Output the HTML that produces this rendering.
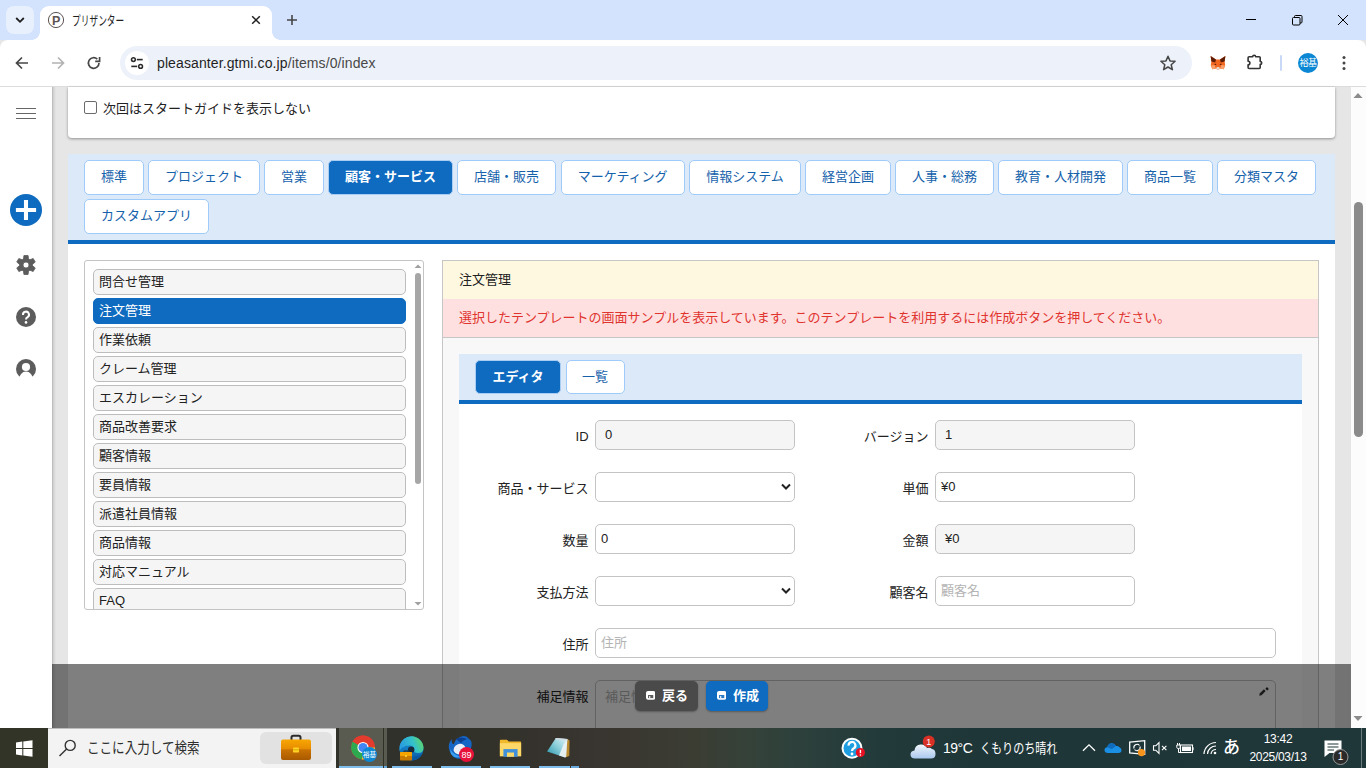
<!DOCTYPE html>
<html lang="ja">
<head>
<meta charset="utf-8">
<title>プリザンター</title>
<style>
*{box-sizing:border-box;margin:0;padding:0}
html,body{width:1366px;height:768px;overflow:hidden;background:#e6e6e6}
body{position:relative;font-family:"Liberation Sans","Noto Sans CJK JP",sans-serif;font-size:13px;color:#222}
.abs{position:absolute}
/* ---------- browser chrome ---------- */
#tabstrip{left:0;top:0;width:1366px;height:40px;background:#d3e3fd}
#tabdd{left:6px;top:6px;width:28px;height:28px;border-radius:8px;background:#e8effd}
#tab{left:40px;top:6px;width:232px;height:34px;background:#fff;border-radius:9px 9px 0 0}
#tab:before,#tab:after{content:"";position:absolute;bottom:0;width:8px;height:8px;background:radial-gradient(circle at 0 0,rgba(255,255,255,0) 7.5px,#fff 8px)}
#tab:before{left:-8px}
#tab:after{right:-8px;background:radial-gradient(circle at 100% 0,rgba(255,255,255,0) 7.5px,#fff 8px)}
#tabtitle{left:72px;top:11.700px;font-size:13px;color:#1f1f1f;line-height:18px;white-space:nowrap;transform:scaleX(.67);transform-origin:0 50%}
#toolbar{left:0;top:40px;width:1366px;height:46px;background:#fff;border-radius:8px 8px 0 0}
#tbline{left:0;top:86px;width:1366px;height:1px;background:#dcdcdc}
#omni{left:120px;top:46px;width:1072px;height:34px;border-radius:17px;background:#edf2fa}
#site{left:125px;top:51px;width:24px;height:24px;border-radius:12px;background:#fff}
#url{left:157px;top:54px;font-size:14px;line-height:18px;color:#1f1f1f;white-space:nowrap;letter-spacing:0.11px}
#url span{color:#474747}
#avatar{left:1297.7px;top:52.5px;width:20.5px;height:20.5px;border-radius:11px;background:#0b87d4;color:#fff;font-size:9px;line-height:20px;text-align:center;letter-spacing:-0.5px}
#sep{left:1280px;top:55px;width:2px;height:16px;background:#c7d9f7;border-radius:1px}
/* ---------- page ---------- */
#side{left:0;top:87px;width:52px;height:641px;background:#fff}
#sideshadow{left:52px;top:87px;width:4px;height:641px;background:linear-gradient(90deg,#b4b4b4,#d4d4d4 40%,#e6e6e6)}
#card1{left:68px;top:87px;width:1267px;height:51px;background:#fff;border-radius:0 0 4px 4px;box-shadow:0 1px 3px rgba(0,0,0,.38)}
#chk{left:84px;top:101px;width:13px;height:13px;border:1px solid #6b6b6b;border-radius:2px;background:#fff}
#chklabel{left:103px;top:99px;line-height:19px;white-space:nowrap;color:#222}
#main{left:68px;top:154px;width:1267px;height:574px;background:#fff}
#tabs{left:68px;top:154px;width:1267px;height:86px;background:#dce9f8}
#tabsline{left:68px;top:240px;width:1267px;height:4px;background:#0f6bbf}
.tb{position:absolute;height:35px;border:1px solid #9fcbfb;border-radius:5px;background:#fff;color:#1562ab;font-size:13px;line-height:32px;text-align:center;white-space:nowrap}
.tb.on{background:#0f6bbf;border-color:#a9cdf3;color:#fff;font-weight:bold}
/* list */
#list{left:84px;top:260px;width:340px;height:350px;border:1px solid #c4c4c4;border-radius:3px;background:#fff;overflow:hidden}
.li{position:absolute;left:8px;width:313px;height:26px;border:1px solid #bdbdbd;border-radius:5px;background:#f5f5f5;line-height:23px;padding-left:5px;color:#222;white-space:nowrap}
.li.on{background:#0f6bbf;border-color:#0f6bbf;color:#fff}
#lthumb{left:330px;top:12px;width:6px;height:211px;border-radius:3px;background:#a6a6a6}
/* right panel */
#panel{left:442px;top:260px;width:877px;height:480px;border:1px solid #c6c6c6;background:#f8f8f8}
#ptitle{left:0;top:0;width:875px;height:38px;background:#fff8e1;line-height:38px;padding-left:16px;color:#222}
#pmsg{left:0;top:38px;width:875px;height:39px;background:#ffe0e0;line-height:38px;padding-left:16px;color:#e0342f;border-bottom:1px solid #c6c6c6;white-space:nowrap}
#itabs{left:16px;top:93px;width:843px;height:46px;background:#dce9f8}
#itabsline{left:16px;top:139px;width:843px;height:4px;background:#0f6bbf}
#form{left:16px;top:143px;width:843px;height:340px;background:#fff}
.lb{position:absolute;text-align:right;white-space:nowrap;line-height:20px;color:#222}
.fd{position:absolute;height:30px;border:1px solid #c4c4c4;border-radius:5px;background:#fff;line-height:27px;padding-left:5px;color:#222;white-space:nowrap}
.fd.ro{background:#f5f5f5;padding-left:9px}
.fd.ph{color:#b4b4b4}
.caret{position:absolute;right:2px;top:10px;width:12px;height:8px}
/* overlay */
#ov{left:52px;top:664px;width:1299px;height:64px;background:rgba(0,0,0,.5)}
.ob{position:absolute;top:17px;height:30px;border-radius:5px;color:#fff;font-weight:bold;font-size:13px;line-height:29px;white-space:nowrap;box-shadow:0 1px 2px rgba(0,0,0,.3)}
/* scrollbar */
#sb{left:1351px;top:87px;width:15px;height:641px;background:#fcfcfc}
#sbthumb{left:1354px;top:202px;width:9px;height:235px;border-radius:4.500px;background:#8b8b8b}
/* taskbar */
#task{left:0;top:728px;width:1366px;height:40px;background:linear-gradient(90deg,#323427 0,#30312a 28%,#32312a 36%,#393530 44%,#3b3d33 51%,#33423a 55.6%,#2a3f3c 60%,#223a3a 64.500%,#1f3638 72%,#20373a 100%)}
#search{left:48px;top:729px;width:288px;height:39px;background:#f3f3f3}
#searchtxt{left:86.500px;top:737px;font-size:15px;line-height:22px;color:#2e2e2e;white-space:nowrap;transform:scaleX(.837);transform-origin:0 50%}
#brief{left:260px;top:732px;width:72px;height:32px;border-radius:6px;background:#e2e2e2}
.tk{position:absolute;color:#fff;white-space:nowrap}
.ul{position:absolute;top:766px;height:2px;background:#7fbdec}
</style>
</head>
<body>
<!-- ======= browser chrome ======= -->
<div id="tabstrip" class="abs"></div>
<div id="tabdd" class="abs"></div>
<div id="tab" class="abs"></div>
<div id="tabtitle" class="abs">プリザンター</div>
<div id="toolbar" class="abs"></div>
<div id="tbline" class="abs"></div>
<div id="omni" class="abs"></div>
<div id="site" class="abs"></div>
<div id="url" class="abs">pleasanter.gtmi.co.jp<span>/items/0/index</span></div>
<div id="sep" class="abs"></div>
<div id="avatar" class="abs">裕基</div>
<svg class="abs" style="left:14px;top:15px" width="12" height="10" viewBox="0 0 12 10"><path d="M2.2 3 L6 6.8 L9.8 3" fill="none" stroke="#1f1f1f" stroke-width="1.8"/></svg>
<svg class="abs" style="left:47px;top:11px" width="18" height="18" viewBox="0 0 18 18"><circle cx="9" cy="9" r="7.6" fill="#fff" stroke="#5e5353" stroke-width="1"/><text x="9.200" y="13.500" text-anchor="middle" font-family="Liberation Sans, sans-serif" font-weight="bold" font-size="12.5" fill="#5e5353">P</text></svg>
<svg class="abs" style="left:250px;top:14px" width="12" height="12" viewBox="0 0 12 12"><path d="M2.2 2.2 L9.8 9.8 M9.8 2.2 L2.2 9.8" stroke="#1f1f1f" stroke-width="1.5" fill="none"/></svg>
<svg class="abs" style="left:285px;top:13px" width="14" height="14" viewBox="0 0 14 14"><path d="M7 2 V12 M2 7 H12" stroke="#444746" stroke-width="1.6" fill="none"/></svg>
<svg class="abs" style="left:1240px;top:10px" width="116" height="20" viewBox="0 0 116 20"><path d="M6 9.5 H16" stroke="#000" stroke-width="1"/><rect x="52.5" y="7.5" width="7.5" height="7.5" rx="1" fill="none" stroke="#000" stroke-width="1"/><path d="M54.5 7.5 V6.5 Q54.5 5.5 55.5 5.5 H61 Q62 5.5 62 6.5 V12 Q62 13 61 13 H60" fill="none" stroke="#000" stroke-width="1"/><path d="M98 5 L108 15 M108 5 L98 15" stroke="#000" stroke-width="1" fill="none"/></svg>
<svg class="abs" style="left:14px;top:55px" width="16" height="16" viewBox="0 0 16 16"><path d="M14 8 H3 M8 2.5 L2.5 8 L8 13.5" fill="none" stroke="#474747" stroke-width="1.7"/></svg>
<svg class="abs" style="left:50px;top:55px" width="16" height="16" viewBox="0 0 16 16"><path d="M2 8 H13 M8 2.5 L13.5 8 L8 13.5" fill="none" stroke="#b3b3b3" stroke-width="1.7"/></svg>
<svg class="abs" style="left:85px;top:54px" width="18" height="18" viewBox="0 0 18 18"><path d="M14 9 A5.3 5.3 0 1 1 12.3 5.1" fill="none" stroke="#474747" stroke-width="1.7"/><path d="M14.6 3 V7.4 H10.2" fill="none" stroke="#474747" stroke-width="1.7"/></svg>
<svg class="abs" style="left:129px;top:55px" width="16" height="16" viewBox="0 0 16 16"><circle cx="4.400" cy="4.600" r="1.900" fill="none" stroke="#2a2a2a" stroke-width="1.500"/><path d="M7.800 4.600 H13.700" stroke="#2a2a2a" stroke-width="1.600"/><path d="M2.300 11.400 H8.200" stroke="#2a2a2a" stroke-width="1.600"/><circle cx="11.600" cy="11.400" r="1.900" fill="none" stroke="#2a2a2a" stroke-width="1.500"/></svg>
<svg class="abs" style="left:1159px;top:54px" width="18" height="18" viewBox="0 0 18 18"><path d="M9 2.2 L11 6.9 L16.1 7.3 L12.2 10.7 L13.4 15.7 L9 13 L4.6 15.7 L5.8 10.7 L1.9 7.3 L7 6.9 Z" fill="none" stroke="#474747" stroke-width="1.5" stroke-linejoin="round"/></svg>
<svg class="abs" style="left:1210px;top:55px" width="16" height="16" viewBox="0 0 16 16"><path d="M0.600 1 L6 4.600 H10 L15.400 1 L14.600 6.600 L15.200 10.400 L13.600 14.200 L10 13.400 L9 14.600 H7 L6 13.400 L2.400 14.200 L0.800 10.400 L1.400 6.600 Z" fill="#f2661f"/><path d="M0.600 1 L6 4.600 L5.200 7.600 L1.400 6.600 Z" fill="#5c1d08"/><path d="M15.400 1 L10 4.600 L10.800 7.600 L14.600 6.600 Z" fill="#5c1d08"/><path d="M0.800 10.400 L4.500 10 L6 13.400 L2.400 14.200Z M15.200 10.400 L11.500 10 L10 13.400 L13.600 14.200Z" fill="#f9a06a"/><path d="M6 13.400 L7 12 H9 L10 13.400 L9 14.600 H7 Z" fill="#e4d6cb"/><path d="M5 8.400 L6.600 10 L4.400 9.800 Z M11 8.400 L9.400 10 L11.600 9.800Z" fill="#3a1208"/></svg>
<svg class="abs" style="left:1246px;top:53px" width="18" height="18" viewBox="0 0 18 18"><path d="M3.100 3.800 H6.700 A1.450 1.600 0 0 1 9.600 3.800 H13.200 Q14.200 3.800 14.200 4.800 V8.500 A1.500 1.450 0 0 1 14.200 11.400 V14.500 Q14.200 15.500 13.200 15.500 H3.100 Q2.100 15.500 2.100 14.500 V11.700 A1.800 1.750 0 0 0 2.100 8.200 V4.800 Q2.100 3.800 3.100 3.800Z" fill="none" stroke="#333" stroke-width="1.600" stroke-linejoin="round"/></svg>
<svg class="abs" style="left:1340px;top:54px" width="8" height="18" viewBox="0 0 8 18"><circle cx="4" cy="3.4" r="1.5" fill="#444"/><circle cx="4" cy="8.900" r="1.5" fill="#444"/><circle cx="4" cy="14.400" r="1.5" fill="#444"/></svg>

<!-- ======= page ======= -->
<div id="side" class="abs"></div>
<div id="sideshadow" class="abs"></div>
<svg class="abs" style="left:16px;top:107px" width="21" height="13" viewBox="0 0 21 13"><path d="M0 1.500 H20 M0 6.500 H20 M0 11.500 H20" stroke="#666" stroke-width="1"/></svg>
<svg class="abs" style="left:10px;top:194px" width="32" height="32" viewBox="0 0 32 32"><circle cx="16" cy="16" r="16" fill="#0f6bbf"/><path d="M16 5.900 V26.100 M5.900 16 H26.100" stroke="#fff" stroke-width="4.100"/></svg>
<svg class="abs" style="left:15.500px;top:255px" width="20" height="20" viewBox="0 0 20 20"><path d="M7.43 3.92 L7.93 0.52 L12.07 0.52 L12.57 3.92 L13.98 4.73 L17.17 3.47 L19.24 7.05 L16.55 9.19 L16.55 10.81 L19.24 12.95 L17.17 16.53 L13.98 15.27 L12.57 16.08 L12.07 19.48 L7.93 19.48 L7.43 16.08 L6.02 15.27 L2.83 16.53 L0.76 12.95 L3.45 10.81 L3.45 9.19 L0.76 7.05 L2.83 3.47 L6.02 4.73Z M10 7 A3 3 0 1 0 10 13 A3 3 0 1 0 10 7Z" fill="#5c5c5c" fill-rule="evenodd" stroke="#5c5c5c" stroke-width="0.8" stroke-linejoin="round"/></svg>
<svg class="abs" style="left:16px;top:307px" width="20" height="20" viewBox="0 0 20 20"><circle cx="10" cy="10" r="10" fill="#5c5c5c"/><path d="M7 8 A3 3 0 1 1 11.600 10.200 Q10 11 10 12.600" fill="none" stroke="#fff" stroke-width="2"/><circle cx="10" cy="15.400" r="1.300" fill="#fff"/></svg>
<svg class="abs" style="left:16px;top:359px" width="20" height="20" viewBox="0 0 20 20"><defs><clipPath id="uc"><circle cx="10" cy="10" r="10"/></clipPath></defs><circle cx="10" cy="10" r="10" fill="#5c5c5c"/><circle cx="10" cy="8" r="4.100" fill="#fff"/><ellipse cx="10" cy="21" rx="7" ry="8.400" fill="#fff"/></svg>
<div id="card1" class="abs"></div>
<div id="chk" class="abs"></div>
<div id="chklabel" class="abs">次回はスタートガイドを表示しない</div>
<div id="main" class="abs"></div>
<div id="tabs" class="abs"></div>
<div id="tabsline" class="abs"></div>
<div class="tb" style="left:84px;top:160px;width:60px">標準</div>
<div class="tb" style="left:148px;top:160px;width:112px">プロジェクト</div>
<div class="tb" style="left:264px;top:160px;width:60px">営業</div>
<div class="tb on" style="left:328px;top:160px;width:125px">顧客・サービス</div>
<div class="tb" style="left:457px;top:160px;width:99px">店舗・販売</div>
<div class="tb" style="left:560.5px;top:160px;width:124.3px">マーケティング</div>
<div class="tb" style="left:689px;top:160px;width:112px">情報システム</div>
<div class="tb" style="left:805px;top:160px;width:86px">経営企画</div>
<div class="tb" style="left:895px;top:160px;width:99px">人事・総務</div>
<div class="tb" style="left:998px;top:160px;width:125px">教育・人材開発</div>
<div class="tb" style="left:1127px;top:160px;width:86px">商品一覧</div>
<div class="tb" style="left:1217px;top:160px;width:99px">分類マスタ</div>
<div class="tb" style="left:84px;top:199px;width:125px">カスタムアプリ</div>
<div id="list" class="abs">
<div class="li" style="top:8px">問合せ管理</div>
<div class="li on" style="top:37px">注文管理</div>
<div class="li" style="top:66px">作業依頼</div>
<div class="li" style="top:95px">クレーム管理</div>
<div class="li" style="top:124px">エスカレーション</div>
<div class="li" style="top:153px">商品改善要求</div>
<div class="li" style="top:182px">顧客情報</div>
<div class="li" style="top:211px">要員情報</div>
<div class="li" style="top:240px">派遣社員情報</div>
<div class="li" style="top:269px">商品情報</div>
<div class="li" style="top:298px">対応マニュアル</div>
<div class="li" style="top:327px">FAQ</div>
<div id="lthumb" class="abs"></div>
<svg class="abs" style="left:328px;top:2px" width="10" height="6" viewBox="0 0 10 6"><path d="M1.5 5 L5 1.5 L8.5 5Z" fill="#a0a0a0"/></svg>
<svg class="abs" style="left:328px;top:340px" width="10" height="6" viewBox="0 0 10 6"><path d="M1.5 1 L5 4.5 L8.5 1Z" fill="#a0a0a0"/></svg>
</div>
<div id="panel" class="abs">
<div id="ptitle" class="abs">注文管理</div>
<div id="pmsg" class="abs">選択したテンプレートの画面サンプルを表示しています。このテンプレートを利用するには作成ボタンを押してください。</div>
<div id="itabs" class="abs"></div>
<div id="itabsline" class="abs"></div>
<div id="form" class="abs"></div>
<div class="tb on" style="left:32px;top:99px;width:86px;height:34px">エディタ</div>
<div class="tb" style="left:122.5px;top:99px;width:59px;height:34px">一覧</div>
<div class="lb" style="right:729.4px;top:166px">ID</div>
<div class="fd ro" style="left:152px;top:159px;width:200px">0</div>
<div class="lb" style="right:389.4px;top:166px">バージョン</div>
<div class="fd ro" style="left:492px;top:159px;width:200px">1</div>
<div class="lb" style="right:729.4px;top:218px">商品・サービス</div>
<div class="fd " style="left:152px;top:211px;width:200px"><svg class="caret" viewBox="0 0 12 8"><path d="M2 1.5 L6 5.5 L10 1.5" fill="none" stroke="#222" stroke-width="2"/></svg></div>
<div class="lb" style="right:389.4px;top:218px">単価</div>
<div class="fd " style="left:492px;top:211px;width:200px">¥0</div>
<div class="lb" style="right:729.4px;top:270px">数量</div>
<div class="fd " style="left:152px;top:263px;width:200px">0</div>
<div class="lb" style="right:389.4px;top:270px">金額</div>
<div class="fd ro" style="left:492px;top:263px;width:200px">¥0</div>
<div class="lb" style="right:729.4px;top:322px">支払方法</div>
<div class="fd " style="left:152px;top:315px;width:200px"><svg class="caret" viewBox="0 0 12 8"><path d="M2 1.5 L6 5.5 L10 1.5" fill="none" stroke="#222" stroke-width="2"/></svg></div>
<div class="lb" style="right:389.4px;top:322px">顧客名</div>
<div class="fd ph" style="left:492px;top:315px;width:200px">顧客名</div>
<div class="lb" style="right:729.4px;top:374px">住所</div>
<div class="fd ph" style="left:152px;top:367px;width:681px">住所</div>
<div class="lb" style="right:729.4px;top:426px">補足情報</div>
<div class="fd ph" style="left:152px;top:419px;width:681px;height:80px;padding-left:9px;line-height:32px">補足情報</div>
<svg class="abs" style="left:815.500px;top:424.500px" width="11" height="10" viewBox="0 0 11 10"><path d="M0.300 9.700 L0.700 7.500 L4.900 3.300 L6.700 5.100 L2.500 9.300Z" fill="#111" fill-opacity="0.850"/><path d="M6.400 2.700 L8 1.100 L9.800 2.900 L8.200 4.500Z" fill="#111" fill-opacity="0.900"/></svg>
</div>
<div id="ov" class="abs">
<div class="ob" style="left:583px;width:63px;background:#4a4a4a;padding-left:27px"><svg style="position:absolute;left:10.700px;top:10.300px" width="9.300" height="8.700" viewBox="0 0 10 10" preserveAspectRatio="none"><rect x="0" y="0" width="10" height="10" rx="2.200" fill="#fff"/><rect x="2.200" y="4.600" width="5.600" height="3.600" fill="#4a4a4a" fill-opacity="0.900"/><rect x="3.400" y="5.800" width="1.200" height="2.400" fill="#fff"/></svg>戻る</div>
<div class="ob" style="left:654px;width:62px;background:#0f6bbf;padding-left:27px"><svg style="position:absolute;left:10.700px;top:10.300px" width="9.300" height="8.700" viewBox="0 0 10 10" preserveAspectRatio="none"><rect x="0" y="0" width="10" height="10" rx="2.200" fill="#fff"/><rect x="2.200" y="4.600" width="5.600" height="3.600" fill="#0f6bbf" fill-opacity="0.900"/><rect x="3.400" y="5.800" width="1.200" height="2.400" fill="#fff"/></svg>作成</div>
</div>
<div id="sb" class="abs"></div>
<div id="sbthumb" class="abs"></div>
<svg class="abs" style="left:1353px;top:92px" width="10" height="7" viewBox="0 0 10 7"><path d="M0.500 6 L5 1 L9.500 6Z" fill="#8b8b8b"/></svg><svg class="abs" style="left:1353px;top:715px" width="10" height="7" viewBox="0 0 10 7"><path d="M0.500 1 L5 6 L9.500 1Z" fill="#8b8b8b"/></svg>
<!-- ======= taskbar ======= -->
<div id="task" class="abs"></div>
<div class="abs" style="left:0;top:728px;width:48px;height:40px;background:#323427"></div>
<svg class="abs" style="left:15.700px;top:739.500px" width="17" height="18" viewBox="0 0 17 18"><path d="M0 2.400 L6.300 1.500 V7.900 H0Z M7.300 1.400 L16.500 0.200 V7.900 H7.300Z M0 8.900 H6.300 V15.400 L0 14.500Z M7.300 8.900 H16.500 V16.700 L7.300 15.500Z" fill="#fff"/></svg>
<div id="search" class="abs"></div>
<div class="abs" style="left:48px;top:728px;width:288px;height:1px;background:#bdbdbd"></div>
<svg class="abs" style="left:57.200px;top:738px" width="20" height="20" viewBox="0 0 20 20"><circle cx="13.200" cy="7.400" r="5" fill="none" stroke="#333" stroke-width="1.400"/><path d="M9.600 11 L2.500 18" stroke="#333" stroke-width="1.400"/></svg>
<div id="searchtxt" class="abs">ここに入力して検索</div>
<div id="brief" class="abs"></div>
<svg class="abs" style="left:280px;top:734px" width="32" height="27" viewBox="0 0 32 27"><defs><linearGradient id="bg1" x1="0" y1="0" x2="0" y2="1"><stop offset="0" stop-color="#f7a600"/><stop offset="0.450" stop-color="#e88d00"/><stop offset="0.500" stop-color="#c97200"/><stop offset="1" stop-color="#a95a00"/></linearGradient></defs><path d="M11.500 6 V3.500 Q11.500 1.800 13.200 1.800 H18.800 Q20.500 1.800 20.500 3.500 V6" fill="none" stroke="#2b2b2b" stroke-width="2"/><rect x="1" y="5.500" width="30" height="20.500" rx="2" fill="url(#bg1)"/><rect x="13" y="13.500" width="6" height="5" rx="0.800" fill="#ffd426"/><rect x="13" y="15.300" width="6" height="1" fill="#e0a800"/></svg>
<div class="abs" style="left:339px;top:728px;width:48px;height:40px;background:#5a5b50"></div>
<div class="abs" style="left:383px;top:728px;width:1px;height:40px;background:#2f3026"></div>
<div class="ul" style="left:339px;width:44px"></div><div class="ul" style="left:384px;width:3px;background:#6aa9dc"></div>
<div class="ul" style="left:392px;width:40px"></div>
<div class="ul" style="left:441px;width:40px"></div>
<div class="ul" style="left:490px;width:40px"></div>
<div class="ul" style="left:539px;width:31px"></div>
<div class="ul" style="left:571px;width:8px;background:#6aa9dc"></div>
<svg class="abs" style="left:350px;top:735px" width="28" height="28" viewBox="0 0 28 28"><circle cx="13" cy="12.500" r="12" fill="#e33b2e"/><path d="M13 12.500 L2.600 6.500 A12 12 0 0 0 12 24.450 L18 14Z" fill="#2da94f"/><path d="M13 12.500 H25 A12 12 0 0 1 12 24.450Z" fill="#fcc31e"/><path d="M13 12.500 L2.600 6.500 A12 12 0 0 1 23.400 6.500 H13Z" fill="#e33b2e"/><circle cx="13" cy="12.500" r="5.600" fill="#fff"/><circle cx="13" cy="12.500" r="4.500" fill="#4285f4"/><circle cx="19.500" cy="19.500" r="7.500" fill="#0b87d4"/><text x="19.500" y="22" text-anchor="middle" font-family="Liberation Sans, Noto Sans CJK JP, sans-serif" font-size="6.500" fill="#fff">裕基</text></svg>
<svg class="abs" style="left:398px;top:735px" width="28" height="27" viewBox="0 0 28 27"><defs><linearGradient id="eg1" x1="0" y1="0.300" x2="1" y2="0"><stop offset="0" stop-color="#2a9fe0"/><stop offset="0.500" stop-color="#35c1c9"/><stop offset="1" stop-color="#6adc4d"/></linearGradient><linearGradient id="eg2" x1="0" y1="0" x2="0" y2="1"><stop offset="0" stop-color="#1a9fe0"/><stop offset="1" stop-color="#0c59a4"/></linearGradient></defs><circle cx="13.500" cy="13.500" r="12" fill="url(#eg2)"/><path d="M1.600 12 A12 12 0 0 1 25.500 12.500 Q25.500 18 20 18 Q15.500 18 16 14.500 Q16 10.500 11.500 10.500 Q4 10.500 1.600 16Z" fill="url(#eg1)"/><circle cx="13.200" cy="14.600" r="3.200" fill="#1b2a3a"/><path d="M16 21 Q21 22 24.500 18 Q22 25 14 25.500Z" fill="#0c59a4"/><rect x="2" y="17" width="12" height="8.500" rx="0.800" fill="#c97a00"/><rect x="2" y="17" width="12" height="4" rx="0.800" fill="#f5a300"/><rect x="7" y="20" width="2" height="1.800" fill="#ffd426"/><path d="M6 17 V16 H10 V17" fill="none" stroke="#2b2b2b" stroke-width="1"/></svg>
<svg class="abs" style="left:447px;top:735px" width="28" height="28" viewBox="0 0 28 28"><path d="M13 2 Q19 -1 22 4 Q26 6 24 13 Q24 22 14 24 Q4 24 2 14 Q1 8 5 4 Q4 9 7 9 Q8 4 13 2Z" fill="#1666c5"/><path d="M9 4 Q14 1 20 4 Q16 5 14 8Z" fill="#0b3f8f"/><ellipse cx="12.500" cy="14" rx="6" ry="5" fill="#e9eef7" transform="rotate(-25 12.500 14)"/><path d="M3 14 Q8 22 16 21 Q9 25 4 19Z" fill="#3aa0ef"/><circle cx="19.500" cy="19.500" r="7.500" fill="#e8113a"/><text x="19.500" y="22.800" text-anchor="middle" font-family="Liberation Sans, sans-serif" font-size="9" fill="#fff">89</text></svg>
<svg class="abs" style="left:498.500px;top:737.500px" width="23" height="20.500" viewBox="0 0 26 24" preserveAspectRatio="none"><path d="M1 3 Q1 2 2 2 H9 L11 4 H24 Q25 4 25 5 V21 H1Z" fill="#f0b92c"/><rect x="1" y="6" width="24" height="15.500" fill="#fbd867"/><rect x="5" y="13" width="16" height="9" fill="#3f8fdb"/><rect x="9" y="17" width="8" height="5" fill="#fbd867"/></svg>
<svg class="abs" style="left:545px;top:734px" width="28" height="28" viewBox="0 0 28 28"><defs><linearGradient id="np" x1="0" y1="1" x2="1" y2="0"><stop offset="0" stop-color="#1f90a6"/><stop offset="0.550" stop-color="#8fd0dc"/><stop offset="1" stop-color="#e3f4f7"/></linearGradient></defs><path d="M22.400 5 L24.600 6.600 L24.300 22 L20.200 23.600Z" fill="#b98a2e"/><path d="M10.850 3.900 L22.400 5 L20.200 23.600 L2.060 17.600Z" fill="url(#np)"/><path d="M18.500 10.500 L22.400 5 L21.300 22.600 L20.200 23.600 L14 21.500Z" fill="#eef3f4" fill-opacity="0.900"/><path d="M10.850 3.900 L22.400 5 L22.200 6.500 L10.300 5.200Z" fill="#d5dde0"/></svg>
<svg class="abs" style="left:840px;top:737px" width="26" height="23" viewBox="0 0 26 23"><circle cx="12" cy="11.200" r="9.500" fill="#1e9ee0" stroke="#fff" stroke-width="2"/><path d="M8.600 8.600 A3.400 3.400 0 1 1 13.800 11.300 Q12 12.300 12 14" fill="none" stroke="#fff" stroke-width="2.200"/><circle cx="12" cy="17" r="1.400" fill="#fff"/><circle cx="20.400" cy="15.600" r="4.600" fill="#e81123"/><path d="M20.400 12.800 V16.200" stroke="#fff" stroke-width="1.400"/><circle cx="20.400" cy="18" r="0.800" fill="#fff"/></svg>
<svg class="abs" style="left:909px;top:734px" width="28" height="26" viewBox="0 0 28 26"><defs><linearGradient id="wc" x1="0" y1="0" x2="0" y2="1"><stop offset="0" stop-color="#f2f6fc"/><stop offset="1" stop-color="#a9c8ee"/></linearGradient></defs><path d="M6 24.500 Q1.500 24.500 1.500 20.500 Q1.500 17 5.500 16.500 Q6 11 11.500 10.500 Q16 10 18 14 Q21 13 23 15 Q26.500 15.500 26.500 20 Q26.500 24.500 22 24.500Z" fill="url(#wc)"/><circle cx="19.800" cy="7.600" r="6" fill="#d93025"/><text x="19.800" y="10.800" text-anchor="middle" font-family="Liberation Sans, sans-serif" font-size="9" fill="#fff">1</text></svg>
<div class="tk" style="left:943px;top:738px;font-size:14px;line-height:20px;letter-spacing:-0.500px">19°C</div>
<div class="tk" style="left:980px;top:738px;font-size:14px;line-height:20px;transform:scaleX(.79);transform-origin:0 50%">くもりのち晴れ</div>
<svg class="abs" style="left:1082px;top:743px" width="14" height="9" viewBox="0 0 14 9"><path d="M1 7.800 L7 1.800 L13 7.800" fill="none" stroke="#fff" stroke-width="1.300"/></svg>
<svg class="abs" style="left:1104px;top:742px" width="18" height="12" viewBox="0 0 18 12"><path d="M4 11 Q0.500 11 0.500 8 Q0.500 5.500 3.300 5.200 Q4 1.500 7.800 1.200 Q10.800 1.200 12 4 Q14 3.600 15.500 5.200 Q17.500 6 17.500 8.300 Q17.500 11 14.500 11Z" fill="#1a8fe3"/><path d="M3.300 5.200 Q4 1.500 7.800 1.200 Q10.800 1.200 12 4 L8 7Z" fill="#0f6cbd"/></svg>
<svg class="abs" style="left:1128px;top:739px" width="19" height="18" viewBox="0 0 19 18"><path d="M1.700 3.200 L16.700 1.700 V15.300 L1.700 13.800Z" fill="none" stroke="#fff" stroke-width="1.300"/><path d="M6 9.500 A3.200 3.200 0 0 1 11.500 6.500 M12 7.500 A3.200 3.200 0 0 1 6.500 10.500" fill="none" stroke="#fff" stroke-width="1.100"/><circle cx="13.500" cy="13.600" r="3.600" fill="#f7941d"/></svg>
<svg class="abs" style="left:1152px;top:741px" width="16" height="14" viewBox="0 0 16 14"><path d="M1.500 4.800 H3.800 L7 1.500 V12.500 L3.800 9.200 H1.500Z" fill="none" stroke="#fff" stroke-width="1.100"/><path d="M10 4.800 L14.400 9.200 M14.400 4.800 L10 9.200" stroke="#fff" stroke-width="1.100"/></svg>
<svg class="abs" style="left:1176px;top:742px" width="18" height="12" viewBox="0 0 18 12"><rect x="4.500" y="3" width="12" height="7.500" fill="none" stroke="#fff" stroke-width="1.100"/><rect x="6" y="4.500" width="9" height="4.500" fill="#fff"/><path d="M17 5.300 V8.300" stroke="#fff" stroke-width="1.200"/><path d="M1.500 1 V3 M3.500 1 V3 M0.800 3 H4.200 V5.500 Q4.200 6.500 2.500 6.500 Q0.800 6.500 0.800 5.500Z M2.500 6.500 V10.500 H4.500" fill="none" stroke="#fff" stroke-width="1"/></svg>
<svg class="abs" style="left:1203px;top:741px" width="15" height="14" viewBox="0 0 15 14"><path d="M1 13 A12 12 0 0 1 13 1.500" fill="none" stroke="#fff" stroke-width="1.200"/><path d="M4.500 13 A8.500 8.500 0 0 1 13 5" fill="none" stroke="#fff" stroke-width="1.200"/><path d="M8 13 A5 5 0 0 1 13 8.500" fill="none" stroke="#fff" stroke-width="1.200"/><circle cx="12" cy="12" r="1.300" fill="#fff"/></svg>
<div class="tk" style="left:1223px;top:736px;font-size:17px;line-height:24px;font-weight:500">あ</div>
<div class="tk" style="left:1248px;top:731px;width:60px;text-align:center;font-size:12px;line-height:16px;letter-spacing:-0.300px">13:42</div>
<div class="tk" style="left:1248px;top:749px;width:60px;text-align:center;font-size:12px;line-height:16px;letter-spacing:-0.300px">2025/03/13</div>
<svg class="abs" style="left:1323px;top:738.500px" width="28" height="28" viewBox="0 0 28 28"><path d="M1.500 1.500 H18.500 V14 H6.500 L1.500 18Z" fill="#fff"/><path d="M4.500 5 H15.500 M4.500 8 H15.500 M4.500 11 H11" stroke="#1e3436" stroke-width="1.100"/><circle cx="17.500" cy="18" r="7.500" fill="#2a2a2a" stroke="#9a9a9a" stroke-width="1"/><text x="17.500" y="21.400" text-anchor="middle" font-family="Liberation Sans, sans-serif" font-size="10" fill="#fff">1</text></svg>
<div class="abs" style="left:1361px;top:728px;width:1px;height:40px;background:#6b7a7a"></div>
</body>
</html>
